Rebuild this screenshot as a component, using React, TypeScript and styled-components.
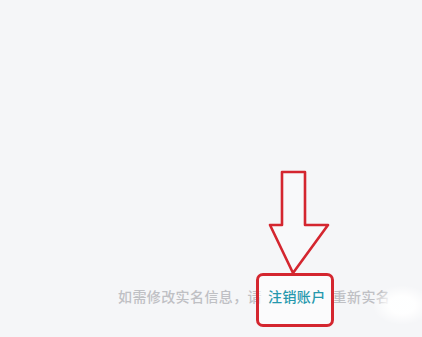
import styled, { createGlobalStyle } from "styled-components";

const GlobalStyle = createGlobalStyle`
  html, body {
    margin: 0;
    padding: 0;
    background: #f5f6f8;
  }
  body {
    font-family: "Noto Sans CJK SC", "Noto Sans", sans-serif;
  }
`;

const Page = styled.div`
  position: relative;
  width: 422px;
  height: 337px;
  overflow: hidden;
  background: #f5f6f8;
  display: flex;
  flex-direction: column;
  justify-content: flex-end;
  padding: 0 0 31px 118px;
  box-sizing: border-box;
`;

const Notice = styled.p`
  margin: 0;
  display: flex;
  align-items: center;
  white-space: nowrap;
  font-size: 14px;
  font-weight: 500;
  line-height: 20px;
  letter-spacing: 0.4px;
  color: #bfc0c4;
`;

const Link = styled.span`
  position: relative;
  padding: 0 7px 0 6px;
  color: #2698ad;
  z-index: 0;
`;

const Callout = styled.span`
  position: absolute;
  left: -6px;
  right: -1px;
  top: -13px;
  bottom: -21px;
  border: 3px solid #d4262f;
  border-radius: 7px;
  background: rgba(255, 255, 255, 0.55);
  z-index: -1;
`;

const Arrow = styled.svg`
  position: absolute;
  left: 6px;
  top: -117px;
`;

const Smudge = styled.div`
  position: absolute;
  right: -10px;
  bottom: 12px;
  width: 60px;
  height: 40px;
  background: radial-gradient(ellipse at center, rgba(255,255,255,0.95) 30%, rgba(255,255,255,0) 70%);
`;

export default function App() {
  return (
    <>
      <GlobalStyle />
      <Page>
        <Notice>
          如需修改实名信息，请
          <Link>
            <Callout />
            <Arrow width="62" height="108" viewBox="0 0 62 108">
              <polygon
                points="14,3 37,3 37,56 60,56 25,104 2,56 14,56"
                fill="rgba(255,255,255,0.35)"
                stroke="#d4262f"
                strokeWidth="2.6"
                strokeLinejoin="round"
              />
            </Arrow>
            注销账户
          </Link>
          重新实名
        </Notice>
        <Smudge />
      </Page>
    </>
  );
}
